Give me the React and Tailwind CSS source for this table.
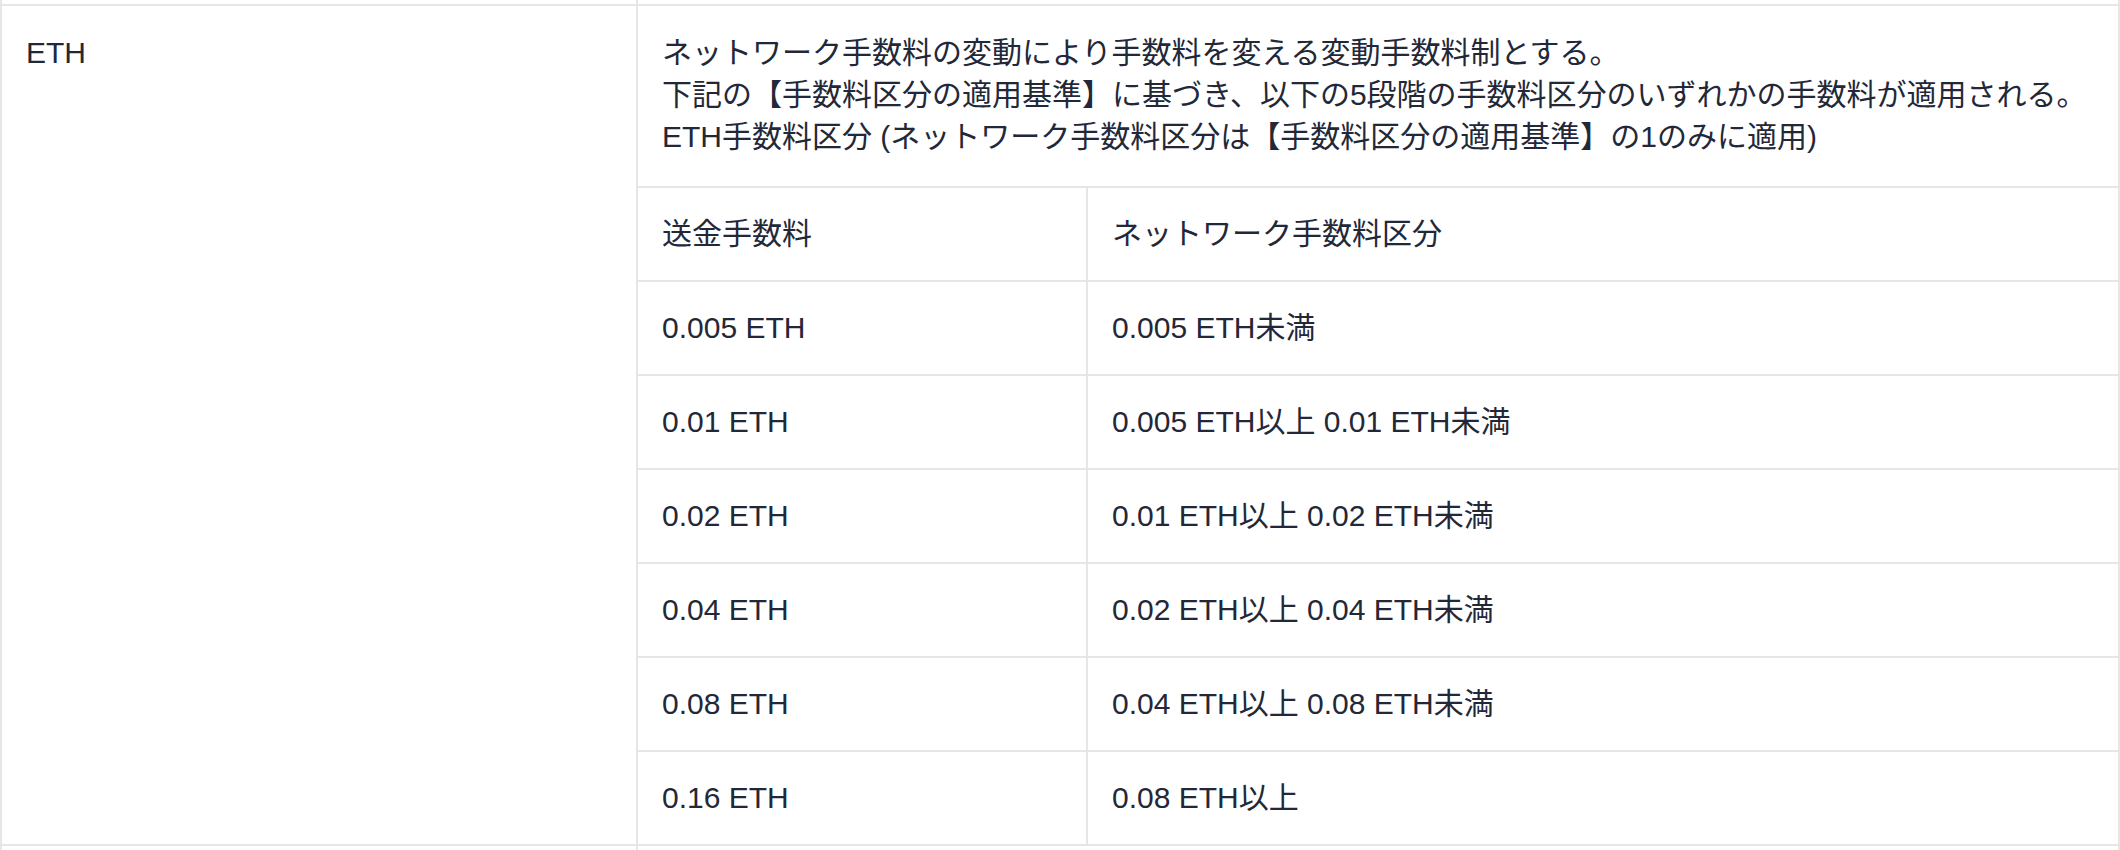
const rows = [
  ['0.005 ETH', '0.005 ETH未満'],
  ['0.01 ETH', '0.005 ETH以上 0.01 ETH未満'],
  ['0.02 ETH', '0.01 ETH以上 0.02 ETH未満'],
  ['0.04 ETH', '0.02 ETH以上 0.04 ETH未満'],
  ['0.08 ETH', '0.04 ETH以上 0.08 ETH未満'],
  ['0.16 ETH', '0.08 ETH以上'],
];

function FeeRow({ fee, range }) {
  return (
    <div className="flex border-t-2 border-[#e6e6e6]">
      <div className="w-[450px] shrink-0 border-r-2 border-[#e6e6e6] px-6 py-[25px]">{fee}</div>
      <div className="flex-1 px-6 py-[25px]">{range}</div>
    </div>
  );
}

export default function App() {
  return (
    <div
      className="w-[2120px] bg-white text-[30px] leading-[42px] text-[#232838]"
      style={{ fontFamily: '"Liberation Sans", "Noto Sans CJK JP", sans-serif' }}
    >
      {/* tail of the row above */}
      <div className="flex h-[4px] border-x-2 border-[#e6e6e6]">
        <div className="w-[636px] shrink-0 border-r-2 border-[#e6e6e6]" />
      </div>

      <div className="flex border-2 border-[#e6e6e6]">
        <div className="w-[636px] shrink-0 border-r-2 border-[#e6e6e6] px-6 pt-[26px]">ETH</div>
        <div className="flex-1">
          <div className="px-6 pt-[26px] pb-[28px]">
            <p>ネットワーク手数料の変動により手数料を変える変動手数料制とする。</p>
            <p>下記の【手数料区分の適用基準】に基づき、以下の5段階の手数料区分のいずれかの手数料が適用される。</p>
            <p>ETH手数料区分 (ネットワーク手数料区分は【手数料区分の適用基準】の1のみに適用)</p>
          </div>
          <FeeRow fee="送金手数料" range="ネットワーク手数料区分" />
          {rows.map(([fee, range]) => (
            <FeeRow key={fee} fee={fee} range={range} />
          ))}
        </div>
      </div>

      {/* start of the row below */}
      <div className="flex h-[4px] border-x-2 border-[#e6e6e6]">
        <div className="w-[636px] shrink-0 border-r-2 border-[#e6e6e6]" />
      </div>
    </div>
  );
}
